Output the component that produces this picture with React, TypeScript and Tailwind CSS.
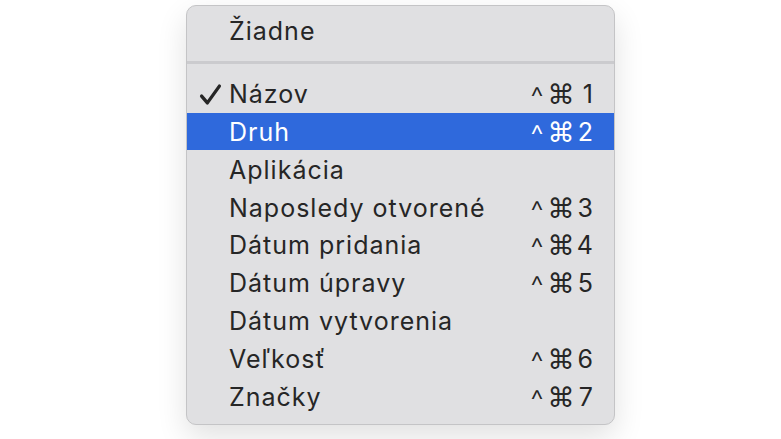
import React from 'react'

type Item = {
    label: string
    keyNum?: string
    checked?: boolean
    active?: boolean
}

const items: Item[] = [
    { label: 'Názov', keyNum: '1', checked: true },
    { label: 'Druh', keyNum: '2', active: true },
    { label: 'Aplikácia' },
    { label: 'Naposledy otvorené', keyNum: '3' },
    { label: 'Dátum pridania', keyNum: '4' },
    { label: 'Dátum úpravy', keyNum: '5' },
    { label: 'Dátum vytvorenia' },
    { label: 'Veľkosť', keyNum: '6' },
    { label: 'Značky', keyNum: '7' },
]

const CheckMark = () => (
    <svg width="23" height="23" viewBox="0 0 22 22" className="block">
        <path d="M2.5 12.5 L8 19 L19.5 3" fill="none" stroke="currentColor" strokeWidth="3.2" strokeLinecap="round" strokeLinejoin="round" />
    </svg>
)

const Shortcut = ({ num }: { num: string }) => (
    <div className="flex items-center">
        <span className="w-[20px] text-center text-[29px] font-light translate-y-[3px]">^</span>
        <span className="w-[28px] text-center font-['DejaVu_Sans',sans-serif] text-[27px]">⌘</span>
        <span className="w-[18px] text-right">{num}</span>
    </div>
)

const MenuRow = ({ item }: { item: Item }) => (
    <div
        className={`flex items-center h-[37.8px] pl-[12px] pr-[21px] pt-[2px] ${item.active ? 'bg-[#2f69dc] text-white' : 'text-[#262626]'}`}
    >
        <div className="w-[30px] flex items-center">{item.checked && <CheckMark />}</div>
        <div className="flex-1 tracking-[1px]">{item.label}</div>
        {item.keyNum && <Shortcut num={item.keyNum} />}
    </div>
)

export default function App() {
    return (
        <div className="w-[781px] h-[439px] bg-white relative font-['Inter',sans-serif] text-[25px] leading-none">
            <div className="absolute left-[186px] top-[5px] w-[429px] h-[420px] rounded-[10px] border border-[#c4c4c6] bg-[#e0e0e2] shadow-[0_12px_30px_rgba(0,0,0,0.12)] pt-[6px] overflow-hidden">
                <MenuRow item={{ label: 'Žiadne' }} />
                <div className="h-[25px] flex items-center">
                    <div className="w-full h-[3px] bg-[#cbcbce]" />
                </div>
                {items.map(item => (
                    <MenuRow key={item.label} item={item} />
                ))}
            </div>
        </div>
    )
}
